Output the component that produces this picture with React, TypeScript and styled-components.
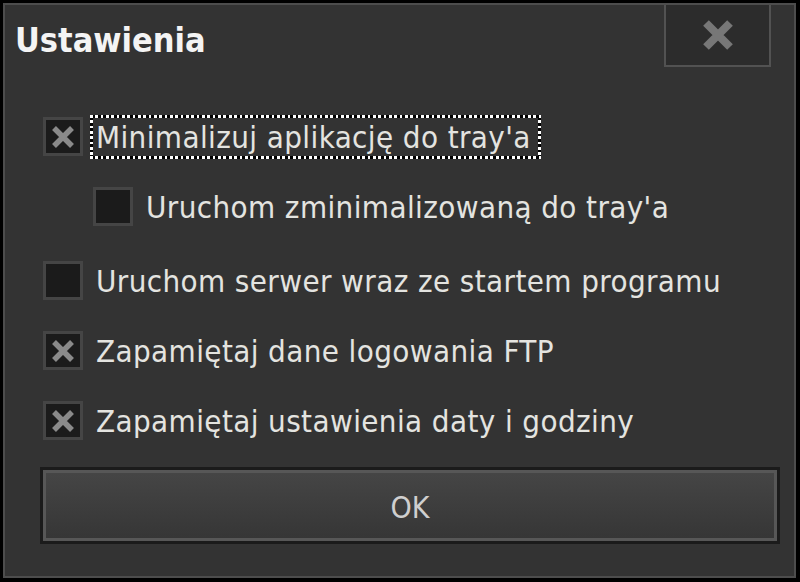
import React from "react";
import styled, { createGlobalStyle, css } from "styled-components";

const GlobalStyle = createGlobalStyle`
  html, body { margin: 0; padding: 0; background: #000; }
  * { box-sizing: border-box; }
`;

const Frame = styled.div`
  width: 800px;
  height: 582px;
  background: #000;
  padding: 3px 4px 4px 3px;
  font-family: "DejaVu Sans Condensed", "DejaVu Sans", sans-serif;
`;

const Window = styled.div`
  height: 100%;
  border: 2px solid #4d4d4d;
  background: #333333;
  display: flex;
  flex-direction: column;
`;

const TitleBar = styled.div`
  height: 62px;
  display: flex;
  align-items: flex-start;
  justify-content: space-between;
  padding-right: 23px;
`;

const Title = styled.div`
  padding: 15px 0 0 10px;
  font-weight: bold;
  font-size: 34px;
  color: #f4f4f4;
  letter-spacing: 0px;
`;

const CloseButton = styled.div`
  width: 107px;
  height: 62px;
  border: 2px solid #525252;
  border-top: none;
  background: #2c2c2c;
  display: flex;
  align-items: center;
  justify-content: center;
`;

const Content = styled.div`
  display: flex;
  flex-direction: column;
  gap: 31px;
  padding: 50px 0 0 38px;
`;

const Row = styled.div<{ $indent?: boolean }>`
  display: flex;
  align-items: center;
  height: 39px;
  padding-left: ${(p) => (p.$indent ? "50px" : "0")};
  margin-bottom: ${(p) => (p.$indent ? "4px" : "0")};
`;

const Box = styled.div`
  width: 40px;
  height: 39px;
  border: 3px solid #454545;
  background: #1b1b1b;
  display: flex;
  align-items: center;
  justify-content: center;
  flex: none;
`;

const focusRing = css`
  background:
    repeating-linear-gradient(90deg, #fff 0 2.67px, #000 2.67px 5.34px) top left / 100% 3px no-repeat,
    repeating-linear-gradient(90deg, #fff 0 2.67px, #000 2.67px 5.34px) bottom left / 100% 3px no-repeat,
    repeating-linear-gradient(180deg, #fff 0 2.67px, #000 2.67px 5.34px) top left / 3px 100% no-repeat,
    repeating-linear-gradient(180deg, #fff 0 2.67px, #000 2.67px 5.34px) top right / 3px 100% no-repeat;
`;

const Label = styled.span<{ $focused?: boolean }>`
  margin-left: 7px;
  height: 44px;
  display: flex;
  align-items: center;
  padding: 0 10px 0 6px;
  font-size: 31px;
  letter-spacing: 0.4px;
  color: #e4e4e0;
  white-space: nowrap;
  ${(p) => p.$focused && focusRing}
`;

const OkButton = styled.div`
  margin: 27px 14px 0 35px;
  height: 77px;
  border: 3px solid #1b1b1b;
  display: flex;
`;

const OkInner = styled.div`
  flex: 1;
  border: 3px solid #575757;
  background: linear-gradient(#454545, #363636);
  display: flex;
  align-items: center;
  justify-content: center;
  padding-top: 4px;
  font-size: 30px;
  color: #cfcfcf;
`;

const XMark = ({ size, stroke, color }: { size: number; stroke: number; color: string }) => (
  <svg width={size} height={size} viewBox="0 0 24 24">
    <path d="M3 3 L21 21 M21 3 L3 21" stroke={color} strokeWidth={stroke} strokeLinecap="butt" fill="none" />
  </svg>
);

type Item = { label: string; checked: boolean; indent?: boolean; focused?: boolean };

const items: Item[] = [
  { label: "Minimalizuj aplikację do tray'a", checked: true, focused: true },
  { label: "Uruchom zminimalizowaną do tray'a", checked: false, indent: true },
  { label: "Uruchom serwer wraz ze startem programu", checked: false },
  { label: "Zapamiętaj dane logowania FTP", checked: true },
  { label: "Zapamiętaj ustawienia daty i godziny", checked: true },
];

export default function App() {
  return (
    <>
      <GlobalStyle />
      <Frame>
        <Window>
          <TitleBar>
            <Title>Ustawienia</Title>
            <CloseButton>
              <XMark size={32} stroke={6} color="#777777" />
            </CloseButton>
          </TitleBar>
          <Content>
            {items.map((it) => (
              <Row key={it.label} $indent={it.indent}>
                <Box>{it.checked && <XMark size={24} stroke={5.5} color="#8a8a8a" />}</Box>
                <Label $focused={it.focused}>{it.label}</Label>
              </Row>
            ))}
          </Content>
          <OkButton>
            <OkInner>OK</OkInner>
          </OkButton>
        </Window>
      </Frame>
    </>
  );
}
